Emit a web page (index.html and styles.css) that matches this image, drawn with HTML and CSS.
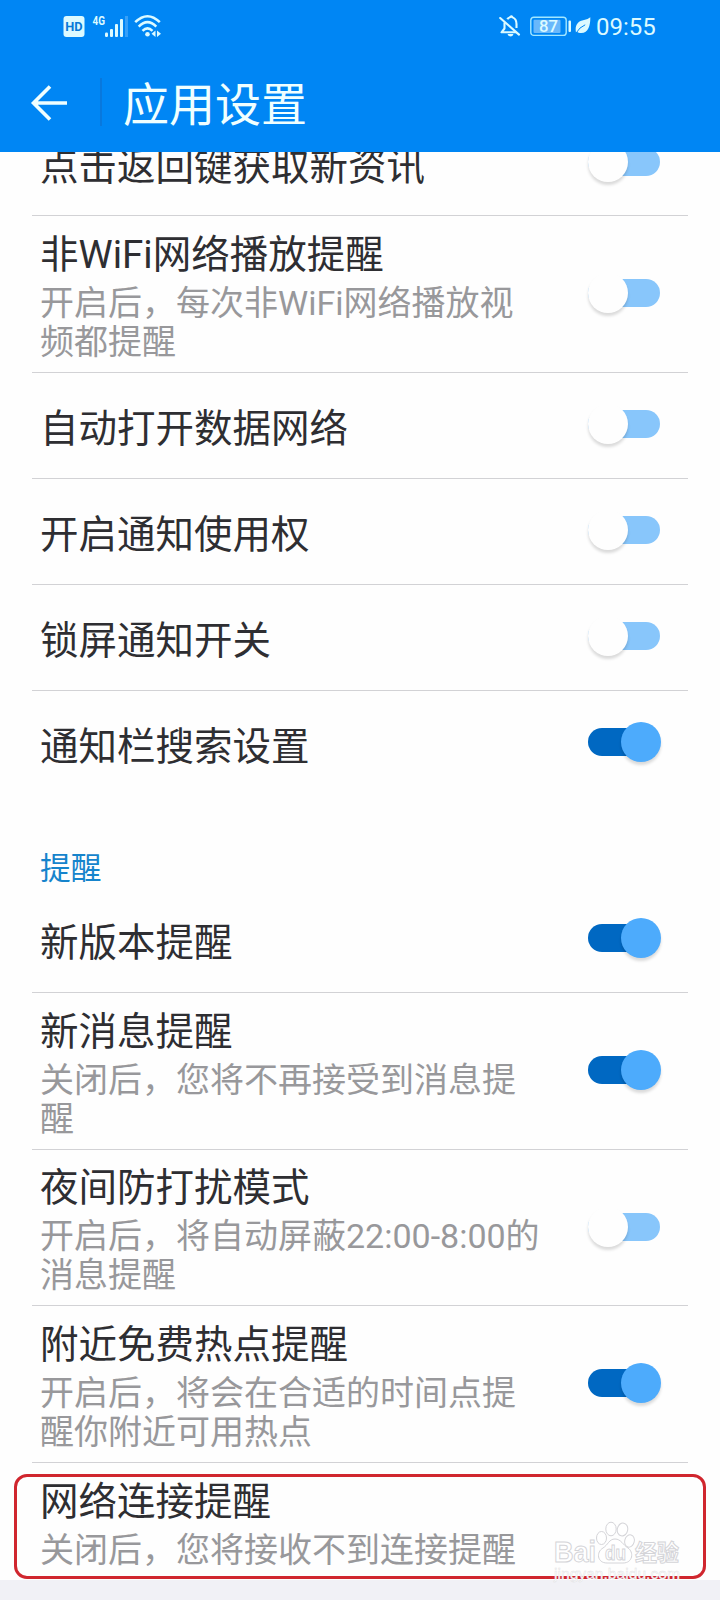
FILE: index.html
```html
<!DOCTYPE html>
<html lang="zh-CN">
<head>
<meta charset="utf-8">
<title>应用设置</title>
<link rel="stylesheet" href="styles.css">
</head>
<body>
<div class="screen">
  <header class="header">
    <div class="status">
      <div class="status-left">
        <svg class="hd" width="22" height="21" viewBox="0 0 22 21"><rect x="0.5" y="0" width="21" height="21" rx="3" fill="#dcfaff"/><text x="2.3" y="14.8" textLength="17.4" lengthAdjust="spacingAndGlyphs" class="hd-text">HD</text></svg>
        <svg class="signal" width="38" height="24" viewBox="0 0 38 24"><text x="0.5" y="10.5" textLength="12.5" lengthAdjust="spacingAndGlyphs" class="net-text">4G</text><g fill="#dcfaff"><rect x="13" y="18.5" width="3" height="4.5" rx="1.2"/><rect x="18" y="15" width="3" height="8" rx="1"/><rect x="23" y="10" width="3" height="13" rx="1"/><rect x="28" y="5" width="3" height="18" rx="1"/><rect x="33" y="2" width="3" height="21" fill="#36a0f8"/></g></svg>
        <svg class="wifi" width="28" height="24" viewBox="0 0 28 24"><g fill="none" stroke="#dcfaff" stroke-width="2.5"><path d="M1.2 8.2Q13.5-3.8 25.8 8.2"/><path d="M4.7 12.6Q13.5 3.8 22.3 12.6"/><path d="M8.5 16.8Q13.5 11.8 18.5 16.8"/></g><circle cx="13.5" cy="20.2" r="2.3" fill="#dcfaff"/><path d="M21.5 16.5v6.5l-4-3.2zM23 16.5v6.5l4-3.2z" fill="#dcfaff"/></svg>
      </div>
      <div class="status-right">
        <svg class="bell" width="24" height="24" viewBox="0 0 24 24"><g fill="none" stroke="#dcfaff" stroke-width="2.1" stroke-linejoin="round"><path d="M8.2 5.2Q9.3 3.8 11.4 3.1Q12.5 1.5 13.6 3.4Q17.5 5 17.5 10V14"/><path d="M5.5 8.5V14.5L2.5 18.3H17.5"/><path d="M1.2 4L20 20.6" stroke-linecap="round"/></g><path d="M8.5 20h6q-.8 2.5-3 2.5t-3-2.5" fill="#dcfaff"/></svg>
        <svg class="battery" width="42" height="21" viewBox="0 0 42 21"><rect x="0.8" y="1.2" width="35.4" height="18.2" rx="3" fill="none" stroke="#a2e7ff" stroke-width="1.4"/><rect x="3.5" y="3.7" width="27" height="13.2" rx="1" fill="#69b8fb"/><text x="9" y="16" textLength="19" lengthAdjust="spacingAndGlyphs" class="battery-text">87</text><rect x="38.5" y="4.5" width="2.5" height="11.5" rx="1" fill="#dcfaff"/></svg>
        <svg class="leaf" width="16" height="18" viewBox="0 0 16 18"><path d="M1 15.7C-.5 8 3 4 9 3Q13 2.3 15.3.3C15.5 8 13.5 17 5 16Q3.5 15.8 2.5 15z" fill="#dcfaff"/><path d="M.8 16.4Q4.5 10 10.2 7.8" fill="none" stroke="#0086f4" stroke-width="1"/></svg>
        <span class="clock">09:55</span>
      </div>
    </div>
    <div class="bar">
      <svg class="back" width="38" height="38" viewBox="0 0 38 38"><path d="M37 19H3.5M20 2.5L3.5 19L20 35.5" fill="none" stroke="#f0ffff" stroke-width="3.6"/></svg>
      <span class="bar-line"></span>
      <h1 class="bar-title">应用设置</h1>
    </div>
  </header>

  <main class="list">
    <section class="row row-cut"><div class="title">点击返回键获取新资讯</div><span class="switch"></span></section>
    <section class="row row-tall"><div class="text"><div class="title">非WiFi网络播放提醒</div><p class="note">开启后，每次非WiFi网络播放视<br>频都提醒</p></div><span class="switch"></span></section>
    <section class="row"><div class="title">自动打开数据网络</div><span class="switch"></span></section>
    <section class="row"><div class="title">开启通知使用权</div><span class="switch"></span></section>
    <section class="row"><div class="title">锁屏通知开关</div><span class="switch"></span></section>
    <section class="row row-plain"><div class="title">通知栏搜索设置</div><span class="switch on"></span></section>
    <h2 class="group">提醒</h2>
    <section class="row"><div class="title">新版本提醒</div><span class="switch on"></span></section>
    <section class="row row-tall"><div class="text"><div class="title">新消息提醒</div><p class="note">关闭后，您将不再接受到消息提<br>醒</p></div><span class="switch on"></span></section>
    <section class="row row-tall row-short"><div class="text"><div class="title">夜间防打扰模式</div><p class="note">开启后，将自动屏蔽22:00-8:00的<br>消息提醒</p></div><span class="switch"></span></section>
    <section class="row row-tall"><div class="text"><div class="title">附近免费热点提醒</div><p class="note">开启后，将会在合适的时间点提<br>醒你附近可用热点</p></div><span class="switch on"></span></section>
    <section class="row row-tall row-last"><div class="text"><div class="title">网络连接提醒</div><p class="note">关闭后，您将接收不到连接提醒</p></div></section>
  </main>

  <div class="highlight"></div>
  <svg class="watermark" width="136" height="66" viewBox="0 0 136 66">
    <g fill="#fff" stroke="#d4d4d8" stroke-width="1">
      <text x="4" y="42" textLength="42" lengthAdjust="spacingAndGlyphs" class="wm-brand">Bai</text>
      <ellipse cx="51.5" cy="18" rx="5" ry="6.5"/><ellipse cx="61" cy="9" rx="5.2" ry="6.8"/><ellipse cx="72.5" cy="9.5" rx="5.2" ry="6.5" transform="rotate(12 72.5 9.5)"/><ellipse cx="79.5" cy="21" rx="4.8" ry="6.2" transform="rotate(15 79.5 21)"/>
      <path d="M65 19C71 19 73 25 78 28C84 32 83 43 73 43H57C47 43 46 32 53 28C58 25 59 19 65 19Z"/>
      <text x="55" y="40" textLength="21" lengthAdjust="spacingAndGlyphs" class="wm-du">du</text>
      <text x="85" y="41" textLength="44" lengthAdjust="spacingAndGlyphs" class="wm-cn">经验</text>
    </g>
    <text x="4" y="59" textLength="126" lengthAdjust="spacingAndGlyphs" class="wm-url">jingyan.baidu.com</text>
  </svg>
</div>
</body>
</html>
```
FILE: styles.css
```css
* { box-sizing: border-box; }
body { margin: 0; background: #f1f1f6; }
.screen {
  position: relative;
  width: 720px;
  height: 1600px;
  overflow: hidden;
  background: #f1f1f6;
  font-family: Roboto, "Noto Sans CJK SC", sans-serif;
}
.header { height: 152px; background: #0086f4; color: #f0ffff; }
.status { display: flex; justify-content: space-between; height: 52px; padding: 0 64px 0 63px; }
.status-left, .status-right { display: flex; align-items: flex-start; }
.hd { margin-top: 16px; }
.signal { margin: 14px 0 0 7px; }
.wifi { margin: 14px 0 0 4px; }
.hd-text { font: 700 12px Roboto, sans-serif; fill: #0879d8; }
.net-text { font: 700 12px Roboto, sans-serif; fill: #dcfaff; }
.battery-text { font: 500 16px Roboto, sans-serif; fill: #dcfaff; }
.bell { margin-top: 14px; }
.battery { margin: 16px 0 0 7px; }
.leaf { margin: 17px 0 0 3px; }
.clock { width: 60px; margin: 12px 0 0 5px; font-size: 24px; line-height: 30px; color: #dcfaff; white-space: nowrap; }
.bar { display: flex; align-items: center; height: 100px; padding-left: 30px; }
.back { margin-top: 2px; }
.bar-line { width: 2px; height: 48px; margin-left: 32px; background: #0878dd; }
.bar-title { margin: 5px 0 0 21px; font-size: 46px; line-height: 60px; font-weight: 400; }
.list { height: 1428px; padding: 0 32px; overflow: hidden; background: #fefefe; }
.row {
  display: flex;
  justify-content: space-between;
  align-items: center;
  height: 106px;
  padding: 0 28px 4px 8px;
  border-bottom: 1px solid #d2d2d5;
}
.row-cut { height: 64px; align-items: flex-end; padding-bottom: 24px; }
.row-cut .switch { margin-bottom: 15px; }
.row-tall { height: 157px; padding-bottom: 2px; }
.row-short { height: 156px; }
.row-plain, .row-last { border-bottom: 0; }
.row-last { height: 117px; align-items: flex-start; padding-top: 9px; }
.title { padding-top: 10px; font-size: 38.5px; line-height: 46px; color: #2e2e32; white-space: nowrap; }
.row-cut .title { margin-bottom: 1px; }
.text { padding-top: 7px; }
.row-tall .title { padding-top: 0; }
.note { margin: 6px 0 0; font-size: 34px; line-height: 39px; color: #98989b; white-space: nowrap; }
.group { margin: 0; height: 90px; padding: 52px 8px 0; font-size: 30.7px; line-height: 40px; font-weight: 400; color: #1684cc; }
.switch { position: relative; flex: none; width: 72px; height: 28px; border-radius: 14px; background: #88c6fb; }
.switch::after {
  content: "";
  position: absolute;
  top: -6px;
  left: 0;
  width: 40px;
  height: 40px;
  border-radius: 50%;
  background: #fefefe;
  box-shadow: 0 3px 3px rgba(0, 0, 0, .14);
}
.switch.on { background: #0068c2; }
.switch.on::after { left: 33px; background: #4dabfc; }
.highlight { position: absolute; left: 14px; top: 1474px; width: 692px; height: 105px; border: 3px solid #d0262e; border-radius: 13px; }
.watermark { position: absolute; left: 550px; top: 1520px; }
.wm-brand { font: 700 29px "Liberation Sans", sans-serif; }
.wm-du { font: 700 20px "Liberation Sans", sans-serif; }
.wm-cn { font: 700 23px "Noto Sans CJK SC", sans-serif; }
.wm-url { font: 400 15px "Liberation Sans", sans-serif; fill: #fff; stroke: #dedee2; stroke-width: .4px; }
```
